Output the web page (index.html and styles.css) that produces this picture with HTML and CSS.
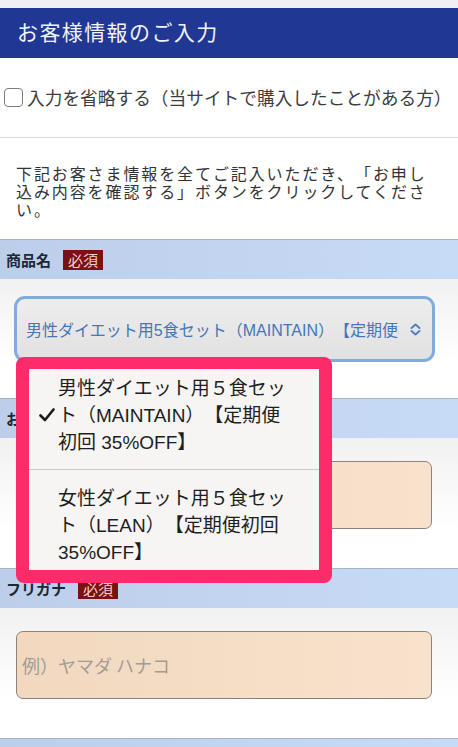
FILE: index.html
```html
<!DOCTYPE html>
<html lang="ja">
<head>
<meta charset="utf-8">
<title>お客様情報のご入力</title>
<link rel="stylesheet" href="styles.css">
</head>
<body>
<div class="page">
  <div class="statusbar"></div>
  <header class="title">お客様情報のご入力</header>

  <section class="skip">
    <label class="skip-label"><span class="checkbox"></span>入力を省略する（当サイトで購入したことがある方）</label>
  </section>

  <section class="intro">
    <p>下記お客さま情報を全てご記入いただき、「お申し<br>込み内容を確認する」ボタンをクリックしてくださ<br>い。</p>
  </section>

  <div class="band"><span class="band-label">商品名</span><span class="req">必須</span></div>
  <div class="field field-select">
    <div class="select">
      <span class="select-text">男性ダイエット用5食セット（MAINTAIN）【定期便初回35%OFF】</span>
      <svg class="chevron" width="11" height="13" viewBox="0 0 11 13"><path d="M1.5 5 L5.5 1.5 L9.5 5 M1.5 8 L5.5 11.5 L9.5 8" fill="none" stroke="#4f82c4" stroke-width="2" stroke-linecap="round" stroke-linejoin="round"/></svg>
    </div>
  </div>

  <div class="band"><span class="band-label">お名前</span><span class="req">必須</span></div>
  <div class="field">
    <div class="input"></div>
  </div>

  <div class="band"><span class="band-label">フリガナ</span><span class="req">必須</span></div>
  <div class="field">
    <div class="input"><span class="placeholder">例）ヤマダ ハナコ</span></div>
  </div>

  <div class="band"></div>

  <div class="picker">
    <div class="picker-inner">
      <div class="option option-first">
        <span class="check"><svg width="16" height="14" viewBox="0 0 16 14"><path d="M1.5 7.5 L6 12 L14.5 1.5" fill="none" stroke="#1c1c1c" stroke-width="2.6" stroke-linecap="round" stroke-linejoin="round"/></svg></span>
        <span class="option-text">男性ダイエット用５食セッ<br>ト（MAINTAIN）【定期便<br>初回 35%OFF】</span>
      </div>
      <div class="option option-last">
        <span class="check"></span>
        <span class="option-text">女性ダイエット用５食セッ<br>ト（LEAN）【定期便初回<br>35%OFF】</span>
      </div>
    </div>
  </div>
</div>
</body>
</html>
```

FILE: styles.css
```css
* {
  box-sizing: border-box;
}

html, body {
  margin: 0;
  padding: 0;
  background: #fff;
}

body {
  font-family: "Noto Sans CJK JP", "Noto Sans", sans-serif;
  color: #333;
  width: 458px;
  height: 747px;
  overflow: hidden;
  text-spacing-trim: space-all;
}

.page {
  position: relative;
  width: 458px;
  height: 747px;
  overflow: hidden;
}

.statusbar {
  height: 8px;
  background: #efeff4;
}

.title {
  height: 50px;
  background: #213794;
  color: #f2f3fb;
  font-size: 21px;
  letter-spacing: 1.4px;
  display: flex;
  align-items: center;
  padding: 0 0 4px 17px;
}

.skip {
  height: 80px;
  border-bottom: 1px solid #dcdcdc;
  display: flex;
  align-items: center;
  padding: 0 0 1px 4px;
}

.skip-label {
  display: flex;
  align-items: center;
  font-size: 17.7px;
  color: #3c3c3c;
  white-space: nowrap;
}

.checkbox {
  width: 19px;
  height: 19px;
  border: 1.6px solid #7d7d7d;
  border-radius: 4px;
  margin-right: 4px;
  background: #fff;
}

.intro {
  height: 101px;
  padding: 26px 0 0 16px;
}

.intro p {
  margin: 0;
  font-size: 16px;
  letter-spacing: 1.9px;
  line-height: 18px;
  color: #333;
  white-space: nowrap;
}

.band {
  height: 40px;
  border-top: 1px solid #a8b4c6;
  background: linear-gradient(to right, #bcceea, #c8dbf6);
  display: flex;
  align-items: center;
  padding-left: 6px;
}

.band-label {
  font-size: 15px;
  font-weight: bold;
  color: #1d2836;
}

.req {
  margin-left: 12px;
  height: 20px;
  line-height: 20px;
  padding: 0 5px;
  background: #7a1212;
  color: #f4cccc;
  font-size: 15px;
}

.field {
  height: 130px;
  padding: 22px 0 0 16px;
  background: linear-gradient(#f1f1f1, #ffffff 70%);
}

.field-select {
  height: 119px;
  padding: 17px 0 0 14px;
}

.field + .band + .field {
  padding-top: 23px;
}

.select {
  width: 421px;
  height: 66px;
  border: 3px solid #7fabdf;
  border-radius: 11px;
  background: linear-gradient(#ededed, #e1e1e1);
  display: flex;
  align-items: center;
  padding: 0 11px 0 9px;
}

.select-text {
  width: 374px;
  overflow: hidden;
  white-space: nowrap;
  font-family: "Liberation Sans", "Noto Sans CJK JP", sans-serif;
  font-size: 16px;
  color: #4576b8;
}

.chevron {
  margin-left: 11px;
  flex: none;
}

.input {
  width: 416px;
  height: 68px;
  border: 1px solid #8d837a;
  border-radius: 7px;
  background: linear-gradient(to right, #f1d8bf, #f9e2cc);
  display: flex;
  align-items: center;
  padding-left: 5px;
}

.placeholder {
  font-size: 18px;
  color: #a39c96;
}

/* native option picker floating over the form */
.picker {
  position: absolute;
  left: 16px;
  top: 357px;
  width: 316px;
  height: 226px;
  border: 13px solid #fd2b6a;
  border-top-width: 12px;
  border-radius: 8px;
  background: #f6f5f3;
}

.picker-inner {
  display: flex;
  flex-direction: column;
}

.option {
  display: flex;
  align-items: center;
  font-family: "Liberation Sans", "Noto Sans CJK JP", sans-serif;
  font-size: 19px;
  line-height: 27px;
  color: #1e1e1e;
}

.option-first {
  padding: 6px 0 13px;
  border-bottom: 1px solid #c9c9c9;
}

.option-last {
  padding: 15px 0 4px;
}

.check {
  width: 29px;
  flex: none;
  display: flex;
  justify-content: center;
  padding-left: 6px;
  padding-bottom: 2px;
}

.option-text {
  white-space: nowrap;
}
```
